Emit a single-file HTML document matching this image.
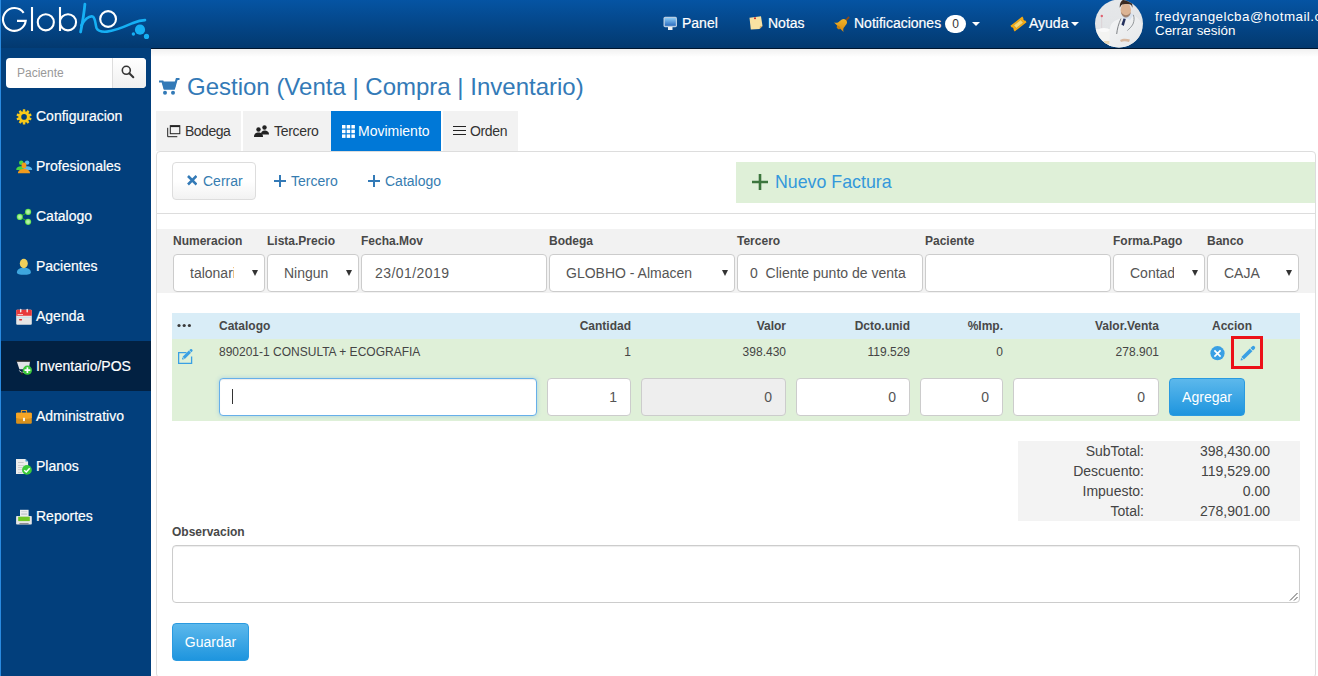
<!DOCTYPE html>
<html><head><meta charset="utf-8">
<style>
*{box-sizing:border-box;margin:0;padding:0}
html,body{width:1318px;height:676px;overflow:hidden;background:#fff;font-family:"Liberation Sans",sans-serif;color:#333;position:relative}
.a{position:absolute}
#hdr{left:0;top:0;width:1318px;height:49px;background:linear-gradient(#0554a3,#03396f);border-bottom:1px solid #00162f}
#lstrip{left:0;top:0;width:1px;height:676px;background:#2a8ae0;z-index:5}
#side{left:0;top:48px;width:151px;height:628px;background:#023f7c}
.nav{color:#fff;font-size:14px;line-height:16px;white-space:nowrap;margin-top:-1px;-webkit-text-stroke:0.2px #fff}
.mi{left:1px;width:150px;height:50px;color:#fff;font-size:14px}
.mi span{position:absolute;left:35px;top:17px;line-height:16px;white-space:nowrap;-webkit-text-stroke:0.2px #fff}
.mi svg{position:absolute;left:15px;top:16px;overflow:visible}
.mi.act{background:#022142}
#shadow{left:151px;top:49px;width:1167px;height:8px;background:linear-gradient(rgba(0,0,0,0.06),rgba(0,0,0,0))}
.title{left:187px;top:73px;font-size:24px;line-height:28px;color:#337ab7;white-space:nowrap}
.tab{top:111px;height:40px;background:#f2f2f2;font-size:14px;color:#333}
.tab span{position:absolute;top:13px;line-height:16px;white-space:nowrap}
.tab.act{background:#0078d7;color:#fff}
#panel{left:156px;top:151px;width:1160px;height:527px;border:1px solid #ddd;border-radius:4px}
.btnd{left:172px;top:162px;width:84px;height:38px;border:1px solid #ddd;border-radius:4px;background:linear-gradient(#fff 50%,#f2f2f2)}
.lnk{font-size:14px;color:#367cb0;line-height:16px;white-space:nowrap}
.lbl{font-size:12px;font-weight:bold;color:#484848;line-height:14px;white-space:nowrap;top:234px}
.inp{top:254px;height:38px;border:1px solid #ccc;border-radius:4px;background:#fff;font-size:14px;color:#555}
.inp span{position:absolute;top:10px;line-height:16px;white-space:nowrap}
.inp i{position:absolute;right:6px;top:15px;width:0;height:0;border-left:3.5px solid transparent;border-right:3.5px solid transparent;border-top:6px solid #333}
.th{font-size:12px;font-weight:bold;color:#484848;line-height:14px;top:319px;white-space:nowrap}
.td{font-size:12px;color:#444;line-height:14px;top:345px;white-space:nowrap}
.ti{top:378px;height:38px;border:1px solid #ccc;border-radius:4px;background:#fff;font-size:14px;color:#555}
.ti span{position:absolute;right:13px;top:10px;line-height:16px}
.tot{font-size:14px;color:#444;line-height:16px;white-space:nowrap;text-align:right}
</style></head><body>
<div id="hdr" class="a"></div>
<div id="lstrip" class="a"></div>
<div id="side" class="a"></div>
<div id="shadow" class="a"></div>

<!-- logo -->
<svg class="a" style="left:0;top:0" width="155" height="45" viewBox="0 0 155 45">
 <g fill="none" stroke="#fff" stroke-width="2.1">
  <path d="M23.65 12.78 A11.4 11.4 0 1 0 25.71 20.90 L17 20.9"/>
  <line x1="32" y1="7" x2="32" y2="31"/>
  <circle cx="45.8" cy="22.3" r="8.05"/>
  <line x1="60" y1="7" x2="60" y2="31"/>
  <circle cx="68" cy="22.3" r="8.05"/>
  <circle cx="108.1" cy="19" r="7.9"/>
 </g>
 <g fill="none" stroke="#16b0f4" stroke-linecap="round">
  <path d="M84.9 4.2 C84.2 12 82.6 22 80.6 32" stroke-width="2.8"/>
  <path d="M81.3 25.5 C84 20 89 15.5 92.5 16.5 C95.5 17.5 95.2 24 96.5 28 C98 31.5 102 32 107 31.6 C115 31 125 26.5 133 23 C138 21 142 20.2 145 20.1" stroke-width="2.6"/>
 </g>
 <g fill="#16b0f4">
  <circle cx="140" cy="29.7" r="5.1"/>
  <circle cx="146.5" cy="36.4" r="2.6"/>
  <circle cx="133.4" cy="34" r="1.7"/>
 </g>
</svg>

<!-- header nav -->
<svg class="a" style="left:663px;top:16px" width="15" height="15" viewBox="0 0 15 15"><defs><linearGradient id="scr" x1="0" y1="0" x2="0" y2="1"><stop offset="0" stop-color="#8ccaf4"/><stop offset="1" stop-color="#2a6cc0"/></linearGradient></defs><rect x="0.5" y="0.8" width="13.5" height="10.4" rx="1.6" fill="#b8cde2"/><rect x="1.8" y="2" width="11" height="7.8" fill="url(#scr)"/><rect x="5" y="11" width="4.5" height="3" fill="#f2f2f2"/></svg>
<div class="a nav" style="left:682px;top:16px">Panel</div>
<svg class="a" style="left:749px;top:16px" width="15" height="14" viewBox="0 0 15 14"><path d="M0.5 1.8 L12 0.3 L13.5 10 L10.5 13 L1.8 13.5 Z" fill="#f8e2a2"/><path d="M10.5 13 L11 10.3 L13.5 10 Z" fill="#d8a860"/><circle cx="6" cy="2.3" r="1" fill="#c82020"/></svg>
<div class="a nav" style="left:768px;top:16px">Notas</div>
<svg class="a" style="left:833px;top:15px" width="18" height="18" viewBox="0 0 18 18"><defs><linearGradient id="bel" x1="0" y1="0" x2="1" y2="1"><stop offset="0" stop-color="#f8c030"/><stop offset="1" stop-color="#d88a10"/></linearGradient></defs><g transform="rotate(45 9 9)"><rect x="8.2" y="-1" width="1.8" height="5" fill="#8a4a18"/><path d="M9 3.5 C5.8 3.5 5.3 6 5.3 8.8 C5.3 11.3 4.3 12.3 2.3 13.5 L15.7 13.5 C13.7 12.3 12.7 11.3 12.7 8.8 C12.7 6 12.2 3.5 9 3.5 Z" fill="url(#bel)"/><ellipse cx="9" cy="14" rx="2" ry="1.5" fill="#c8800c"/></g></svg>
<div class="a nav" style="left:854px;top:16px">Notificaciones</div>
<div class="a" style="left:945px;top:15px;width:21px;height:18px;border-radius:9px;background:#fff;color:#333;font-size:12px;text-align:center;line-height:18px">0</div>
<div class="a" style="left:972px;top:22px;width:0;height:0;border-left:4px solid transparent;border-right:4px solid transparent;border-top:4px solid #fff"></div>
<svg class="a" style="left:1010px;top:16px" width="17" height="16" viewBox="0 0 17 16"><g transform="rotate(-38 8.5 8)"><path d="M1 4.5 H16 V6.5 C15 6.5 15 9.5 16 9.5 V11.5 H1 V9.5 C2 9.5 2 6.5 1 6.5 Z" fill="#f6aa10"/><rect x="4" y="6" width="9" height="4" fill="#f4d878" stroke="#c89830" stroke-width="0.6"/></g></svg>
<div class="a nav" style="left:1029px;top:16px">Ayuda</div>
<div class="a" style="left:1071px;top:22px;width:0;height:0;border-left:4px solid transparent;border-right:4px solid transparent;border-top:4px solid #fff"></div>

<!-- avatar -->
<svg class="a" style="left:1094px;top:-1px" width="50" height="50" viewBox="0 0 50 50">
 <defs><clipPath id="cc"><circle cx="25" cy="24.6" r="24"/></clipPath>
 <linearGradient id="bgav" x1="0" y1="0" x2="0" y2="1"><stop offset="0" stop-color="#e6e8ea"/><stop offset="0.6" stop-color="#e2e4e6"/><stop offset="1" stop-color="#f2f2f0"/></linearGradient>
 <linearGradient id="coat" x1="0" y1="0" x2="1" y2="1"><stop offset="0" stop-color="#f4f5f6"/><stop offset="1" stop-color="#e4e6e8"/></linearGradient></defs>
 <circle cx="25" cy="24.6" r="24" fill="url(#bgav)"/>
 <g clip-path="url(#cc)">
  <rect x="0" y="30" width="18" height="20" fill="#f4f4f2"/>
  <ellipse cx="10" cy="31" rx="5" ry="2" fill="#fafafa"/>
  <rect x="7.5" y="17" width="0.6" height="12" fill="#d8c8cc"/>
  <circle cx="7.8" cy="17" r="1.2" fill="#e06070"/>
  <rect x="10" y="42" width="8" height="3" fill="#e8d8b8"/>
  <path d="M15 50 L16 29 C17 24 20 22 24 20.5 L29 18 L38 16 C42 17 46 20 48 26 L50 50 Z" fill="url(#coat)"/>
  <path d="M28 15.2 L29 21.6 L33 19.5 L36 21 L39.8 15.2 C36 13.5 31 13.5 28 15.2 Z" fill="#d8e2ee"/>
  <path d="M29.5 19.5 L31.8 20 L29.8 27 L27.4 25.5 Z" fill="#26325e"/>
  <path d="M27 19.5 C24.5 25 23.2 30 22.7 35" stroke="#707478" stroke-width="0.9" fill="none"/>
  <path d="M39.4 15.9 C40.5 19 40.2 22 39 25 C37.5 28 35 30 33.4 31.5" stroke="#8a8e92" stroke-width="0.9" fill="none"/>
  <path d="M26 41 C29 39 33 39.5 36 40.5 L35 43 C32 42 29 42 27 43 Z" fill="#d8b8a0"/>
  <ellipse cx="31.8" cy="11" rx="5.2" ry="6.7" fill="#dcb494"/>
  <path d="M27 13 C27.5 17 30 18.5 32 18.5 C34 18.5 36.5 17 36.8 13 C35.5 15.5 33.5 16.2 32 16.2 C30.5 16.2 28.5 15.5 27 13 Z" fill="#7a5a48" opacity="0.6"/>
  <path d="M25.8 8.8 C25.2 2.5 29 0 32.2 0 C36 0 38.8 2.5 38.4 8.8 L37.2 6 C35 4.8 29.5 4.8 27.2 6.2 Z" fill="#3a2a22"/>
 </g>
</svg>
<div class="a" style="left:1155px;top:10px;font-size:13.4px;line-height:14px;color:#fff;white-space:nowrap;letter-spacing:0.45px">fredyrangelcba@hotmail.com</div>
<div class="a" style="left:1155px;top:24px;font-size:13.4px;line-height:14px;color:#fff;white-space:nowrap">Cerrar sesión</div>

<!-- sidebar search -->
<div class="a" style="left:6px;top:58px;width:140px;height:30px;background:#fff;border-radius:4px"></div>
<div class="a" style="left:112px;top:58px;width:34px;height:30px;border-left:1px solid #ddd;border-radius:0 4px 4px 0;background:linear-gradient(#fff,#f0f0f0)"></div>
<div class="a" style="left:17px;top:66px;font-size:12px;line-height:14px;color:#999">Paciente</div>
<svg class="a" style="left:121px;top:65px" width="14" height="14" viewBox="0 0 14 14"><circle cx="5.3" cy="5.3" r="4" fill="none" stroke="#333" stroke-width="1.6"/><line x1="8.3" y1="8.3" x2="12.3" y2="12.3" stroke="#333" stroke-width="2" stroke-linecap="round"/></svg>

<!-- sidebar menu -->
<div class="a mi" style="top:91px"><svg width="18" height="19" viewBox="0 0 18 19"><g fill="#f7c91a"><circle cx="8.05" cy="9.9" r="5.7"/><rect x="6.80" y="2.30" width="2.5" height="4" rx="0.5" transform="rotate(0 8.05 9.9)"/><rect x="6.80" y="2.30" width="2.5" height="4" rx="0.5" transform="rotate(36 8.05 9.9)"/><rect x="6.80" y="2.30" width="2.5" height="4" rx="0.5" transform="rotate(72 8.05 9.9)"/><rect x="6.80" y="2.30" width="2.5" height="4" rx="0.5" transform="rotate(108 8.05 9.9)"/><rect x="6.80" y="2.30" width="2.5" height="4" rx="0.5" transform="rotate(144 8.05 9.9)"/><rect x="6.80" y="2.30" width="2.5" height="4" rx="0.5" transform="rotate(180 8.05 9.9)"/><rect x="6.80" y="2.30" width="2.5" height="4" rx="0.5" transform="rotate(216 8.05 9.9)"/><rect x="6.80" y="2.30" width="2.5" height="4" rx="0.5" transform="rotate(252 8.05 9.9)"/><rect x="6.80" y="2.30" width="2.5" height="4" rx="0.5" transform="rotate(288 8.05 9.9)"/><rect x="6.80" y="2.30" width="2.5" height="4" rx="0.5" transform="rotate(324 8.05 9.9)"/></g><circle cx="8.05" cy="9.9" r="2.8" fill="#023f7c"/></svg><span>Configuracion</span></div>
<div class="a mi" style="top:141px"><svg width="18" height="19" viewBox="0 0 18 19"><defs></defs><g fill="#4cd640"><circle cx="5.2" cy="5.8" r="2.2"/><path d="M0.2 13 C0.2 10.5 2 9.3 5 9.3 C7 9.3 8.5 10 8.5 13 Z"/></g><g fill="#5ab8ec"><circle cx="11.1" cy="5.6" r="2.2"/><path d="M7.5 13 C7.5 10 9 9.3 11 9.3 C14 9.3 16.2 10.5 16.2 13 Z"/></g><g fill="#f29a1c"><ellipse cx="8" cy="8.5" rx="2.4" ry="2.9"/><path d="M1.9 16.2 C1.9 13.5 4.5 12.3 6.8 12 L9.2 12 C11.5 12.3 14 13.5 14 16.2 Z"/></g></svg><span>Profesionales</span></div>
<div class="a mi" style="top:191px"><svg width="18" height="19" viewBox="0 0 18 19"><defs><radialGradient id="gdot"><stop offset="0" stop-color="#c4f2b8"/><stop offset="0.55" stop-color="#a0ec90"/><stop offset="1" stop-color="#4ddc3c"/></radialGradient></defs><g stroke="#3aa030" stroke-width="1"><line x1="3.8" y1="9.9" x2="12.1" y2="4.9"/><line x1="3.8" y1="9.9" x2="12.1" y2="14.8"/></g><g fill="url(#gdot)"><circle cx="3.8" cy="9.9" r="3.1"/><circle cx="12.1" cy="4.9" r="3.1"/><circle cx="12.1" cy="14.8" r="3.1"/></g></svg><span>Catalogo</span></div>
<div class="a mi" style="top:241px"><svg width="18" height="19" viewBox="0 0 18 19"><path d="M0.9 15.5 C0.9 12.5 3.5 10.8 7.9 10.8 C12.3 10.8 14.9 12.5 14.9 15.5 C14.9 17.2 12 17.8 7.9 17.8 C3.8 17.8 0.9 17.2 0.9 15.5 Z" fill="#3ea6de"/><ellipse cx="7.8" cy="6.5" rx="4" ry="4.7" fill="#efcf5a"/></svg><span>Pacientes</span></div>
<div class="a mi" style="top:291px"><svg width="18" height="19" viewBox="0 0 18 19"><rect x="0.2" y="2.8" width="15.6" height="15" rx="1" fill="#e6e6e6"/><path d="M0.2 3.8 C0.2 3.2 0.6 2.8 1.2 2.8 H14.8 C15.4 2.8 15.8 3.2 15.8 3.8 V8.8 H0.2 Z" fill="#e8393a"/><rect x="1" y="10" width="14" height="0.9" fill="#c8e0ec"/><rect x="3.1" y="12" width="3" height="1.4" rx="0.6" fill="#e03030"/><rect x="4" y="1.8" width="1.4" height="3.6" rx="0.7" fill="#f0f0f0"/><rect x="10.5" y="1.8" width="1.4" height="3.6" rx="0.7" fill="#f0f0f0"/><rect x="1.5" y="7" width="5.5" height="0.9" fill="#f8d0d0"/></svg><span>Agenda</span></div>
<div class="a mi act" style="top:341px"><svg width="18" height="19" viewBox="0 0 18 19"><path d="M0.8 4.6 H14 L12.8 12.3 H3.4 Z" fill="#e4e4e6"/><rect x="0.1" y="3.3" width="14.5" height="1.3" fill="#2a2622"/><path d="M3.4 13.5 L5 15.3 H10" stroke="#eee" stroke-width="1" fill="none"/><circle cx="6" cy="16.5" r="1.2" fill="#2a2622"/><circle cx="11.4" cy="13.2" r="4.6" fill="#3cc83a"/><path d="M11.4 10.3 V16.1 M8.5 13.2 H14.3" stroke="#fff" stroke-width="1.7"/></svg><span>Inventario/POS</span></div>
<div class="a mi" style="top:391px"><svg width="18" height="19" viewBox="0 0 18 19"><path d="M4.9 5.8 V3.6 C4.9 3.3 5.1 3.1 5.4 3.1 H10.6 C10.9 3.1 11.1 3.3 11.1 3.6 V5.8 H9.9 V4.1 H6.1 V5.8 Z" fill="#e89a20"/><rect x="0.1" y="5.8" width="15.7" height="11" rx="1.2" fill="#d8901c"/><path d="M0.1 7 C0.1 6.3 0.6 5.8 1.3 5.8 H14.6 C15.3 5.8 15.8 6.3 15.8 7 V11 C11 12.3 5 12.3 0.1 11 Z" fill="#f5a524"/><rect x="7" y="10.8" width="2" height="3.3" fill="#f6f0e0"/></svg><span>Administrativo</span></div>
<div class="a mi" style="top:441px"><svg width="18" height="19" viewBox="0 0 18 19"><path d="M0 2 H9.5 L12.1 4.6 V17 H0 Z" fill="#ececec"/><path d="M9.5 2 L12.1 4.6 H9.5 Z" fill="#3a98d0"/><g fill="#c8c8c8"><rect x="2" y="5" width="5.6" height="1"/><rect x="2" y="8.2" width="6" height="0.8"/><rect x="2" y="10.2" width="4.5" height="0.8"/><rect x="2" y="12.3" width="4" height="0.8"/><rect x="2" y="15" width="4" height="0.8"/></g><circle cx="10.9" cy="12.9" r="4.9" fill="#3ccc38"/><path d="M8.2 13.2 L10.3 15 L13.7 11.2" stroke="#fff" stroke-width="1.5" fill="none"/></svg><span>Planos</span></div>
<div class="a mi" style="top:491px"><svg width="18" height="19" viewBox="0 0 18 19"><rect x="4" y="2.8" width="8.6" height="7" fill="#eeeeee"/><rect x="5.2" y="4.3" width="6" height="0.8" fill="#c8ccd0"/><rect x="5.2" y="6.3" width="6" height="1.6" fill="#c8ccd0"/><rect x="0.1" y="9" width="15.7" height="8.6" rx="0.8" fill="#e6e6e6"/><rect x="2.2" y="9.7" width="11.6" height="4.4" fill="#72c826"/><rect x="3.4" y="16.2" width="9.2" height="1.1" fill="#7a7a7a"/></svg><span>Reportes</span></div>

<!-- title -->
<svg class="a" style="left:159px;top:78px" width="21" height="17" viewBox="0 0 21 17"><path d="M0 3.5 H3.5 L5.5 10.5 H15 L17 3.5 L17.8 1 H20.5" fill="none" stroke="#337ab7" stroke-width="2.2"/><path d="M3 3.5 H17.5 L15.5 11.5 H5 Z" fill="#337ab7"/><circle cx="6" cy="14.8" r="2" fill="#337ab7"/><circle cx="14" cy="14.8" r="2" fill="#337ab7"/></svg>
<div class="a title">Gestion (Venta | Compra | Inventario)</div>

<!-- tabs -->
<div class="a tab" style="left:156px;width:85px"><svg class="a" style="left:11px;top:14px" width="14" height="13" viewBox="0 0 14 13"><rect x="3.3" y="0.7" width="9.5" height="8" fill="none" stroke="#222" stroke-width="1"/><rect x="3.3" y="0.5" width="9.5" height="1.6" fill="#222"/><path d="M0.7 2.8 V11.7 H10.3" fill="none" stroke="#222" stroke-width="1"/></svg><span style="left:29px;top:12px;letter-spacing:-0.5px">Bodega</span></div>
<div class="a tab" style="left:243px;width:88px"><svg class="a" style="left:11px;top:14px" width="15" height="12" viewBox="0 0 15 12"><circle cx="4.5" cy="4.5" r="2.2" fill="#222"/><path d="M0 12 C0 8.5 2 7.5 4.5 7.5 C7 7.5 9 8.5 9 12 Z" fill="#222"/><circle cx="10.5" cy="2.5" r="2.2" fill="#222"/><path d="M7 9.5 C7 6.5 8.5 5.5 10.5 5.5 C12.8 5.5 15 6.5 15 9.5 Z" fill="#222"/></svg><span style="left:31px;top:12px;letter-spacing:-0.3px">Tercero</span></div>
<div class="a tab act" style="left:331px;width:110px"><svg class="a" style="left:11px;top:14px" width="13" height="13" viewBox="0 0 13 13"><g fill="#fff"><rect x="0" y="0" width="3.5" height="3.5"/><rect x="4.7" y="0" width="3.5" height="3.5"/><rect x="9.4" y="0" width="3.5" height="3.5"/><rect x="0" y="4.7" width="3.5" height="3.5"/><rect x="4.7" y="4.7" width="3.5" height="3.5"/><rect x="9.4" y="4.7" width="3.5" height="3.5"/><rect x="0" y="9.4" width="3.5" height="3.5"/><rect x="4.7" y="9.4" width="3.5" height="3.5"/><rect x="9.4" y="9.4" width="3.5" height="3.5"/></g></svg><span style="left:27px;top:12px">Movimiento</span></div>
<div class="a tab" style="left:443px;width:75px"><svg class="a" style="left:10px;top:15px" width="13" height="11" viewBox="0 0 13 11"><g stroke="#222" stroke-width="1"><line x1="0" y1="0.5" x2="13" y2="0.5"/><line x1="0" y1="4.5" x2="13" y2="4.5"/><line x1="0" y1="8.5" x2="13" y2="8.5"/></g></svg><span style="left:27px;top:12px;letter-spacing:-0.35px">Orden</span></div>

<!-- panel -->
<div id="panel" class="a"></div>

<div class="a btnd"></div>
<svg class="a" style="left:187px;top:175px" width="10" height="11" viewBox="0 0 10 11"><path d="M1 1 L9.5 9.5 M9.5 1 L1 9.5" stroke="#337ab7" stroke-width="2.6"/></svg>
<div class="a lnk" style="left:203px;top:173px">Cerrar</div>
<svg class="a" style="left:274px;top:175px" width="12" height="12" viewBox="0 0 12 12"><path d="M6 0 V12 M0 6 H12" stroke="#337ab7" stroke-width="2"/></svg>
<div class="a lnk" style="left:291px;top:173px">Tercero</div>
<svg class="a" style="left:368px;top:175px" width="12" height="12" viewBox="0 0 12 12"><path d="M6 0 V12 M0 6 H12" stroke="#337ab7" stroke-width="2"/></svg>
<div class="a lnk" style="left:385px;top:173px">Catalogo</div>
<div class="a" style="left:736px;top:162px;width:579px;height:41px;background:#dff0d8"></div>
<svg class="a" style="left:752px;top:174px" width="16" height="16" viewBox="0 0 16 16"><path d="M8 0 V16 M0 8 H16" stroke="#3c763d" stroke-width="2.6"/></svg>
<div class="a" style="left:775px;top:172px;font-size:17.8px;line-height:21px;color:#3498db;white-space:nowrap">Nuevo Factura</div>
<div class="a" style="left:157px;top:213px;width:1158px;height:1px;background:#ddd"></div>
<div class="a" style="left:157px;top:229px;width:1158px;height:64px;background:#f2f2f2"></div>

<!-- form -->
<div class="a lbl" style="left:173px">Numeracion</div>
<div class="a inp" style="left:173px;width:92px"><span style="left:16px;width:44px;overflow:hidden;display:block">talonario</span><i></i></div>
<div class="a lbl" style="left:267px">Lista.Precio</div>
<div class="a inp" style="left:267px;width:92px"><span style="left:16px;width:44px;overflow:hidden;display:block">Ningun</span><i></i></div>
<div class="a lbl" style="left:361px">Fecha.Mov</div>
<div class="a inp" style="left:361px;width:186px"><span style="left:13px;letter-spacing:0.45px">23/01/2019</span></div>
<div class="a lbl" style="left:549px">Bodega</div>
<div class="a inp" style="left:549px;width:186px"><span style="left:16px;width:138px;overflow:hidden;display:block">GLOBHO - Almacen</span><i></i></div>
<div class="a lbl" style="left:737px">Tercero</div>
<div class="a inp" style="left:737px;width:186px"><span style="left:12px">0&nbsp; Cliente punto de venta</span></div>
<div class="a lbl" style="left:925px">Paciente</div>
<div class="a inp" style="left:925px;width:186px"><span style="left:13px"></span></div>
<div class="a lbl" style="left:1113px">Forma.Pago</div>
<div class="a inp" style="left:1113px;width:92px"><span style="left:16px;width:44px;overflow:hidden;display:block">Contado</span><i></i></div>
<div class="a lbl" style="left:1207px">Banco</div>
<div class="a inp" style="left:1207px;width:92px"><span style="left:16px;width:44px;overflow:hidden;display:block">CAJA</span><i></i></div>

<!-- table -->
<div class="a" style="left:172px;top:313px;width:1128px;height:26px;background:#d9edf7"></div>
<div class="a" style="left:172px;top:339px;width:1128px;height:82px;background:#dff0d8"></div>
<svg class="a" style="left:177px;top:323px" width="15" height="5" viewBox="0 0 15 5"><g fill="#3a3a3a"><circle cx="2" cy="2.5" r="1.6"/><circle cx="7.2" cy="2.5" r="1.6"/><circle cx="12.4" cy="2.5" r="1.6"/></g></svg>
<div class="a th" style="left:219px">Catalogo</div>
<div class="a th" style="left:531px;width:100px;text-align:right">Cantidad</div>
<div class="a th" style="left:686px;width:100px;text-align:right">Valor</div>
<div class="a th" style="left:810px;width:100px;text-align:right">Dcto.unid</div>
<div class="a th" style="left:903px;width:100px;text-align:right">%Imp.</div>
<div class="a th" style="left:1059px;width:100px;text-align:right">Valor.Venta</div>
<div class="a th" style="left:1182px;width:100px;text-align:center">Accion</div>
<svg class="a" style="left:178px;top:349px" width="16" height="16" viewBox="0 0 16 16"><path d="M8.5 3.6 H0.6 V14.4 H13.6 V7.5" fill="none" stroke="#3aa0e4" stroke-width="1.3"/><g transform="translate(4 10.6) rotate(-45)" fill="#3aa0e4"><path d="M0 0 L1.8 -1.4 L1.8 1.4 Z"/><rect x="2.4" y="-1.5" width="8.8" height="3"/><path d="M11.8 -1.5 H12.8 A1.5 1.5 0 0 1 12.8 1.5 H11.8 Z"/></g></svg>
<div class="a td" style="left:219px">890201-1 CONSULTA + ECOGRAFIA</div>
<div class="a td" style="left:531px;width:100px;text-align:right">1</div>
<div class="a td" style="left:686px;width:100px;text-align:right">398.430</div>
<div class="a td" style="left:810px;width:100px;text-align:right">119.529</div>
<div class="a td" style="left:903px;width:100px;text-align:right">0</div>
<div class="a td" style="left:1059px;width:100px;text-align:right">278.901</div>
<svg class="a" style="left:1210px;top:346px" width="15" height="15" viewBox="0 0 15 15"><circle cx="7.5" cy="7.2" r="7.1" fill="#3aa0e4"/><path d="M4.4 4.4 L10.6 10.6 M10.6 4.4 L4.4 10.6" stroke="#fff" stroke-width="1.7"/></svg>
<div class="a" style="left:1231px;top:336px;width:32px;height:33px;border:3px solid #ec1018"></div>
<svg class="a" style="left:1240px;top:345px" width="16" height="16" viewBox="0 0 16 16"><g transform="translate(0.6 15.4) rotate(-45)" fill="#3aa0e4"><path d="M0 0 L2.2 -1.5 L2.2 1.5 Z"/><rect x="2.9" y="-1.8" width="12" height="3.6"/><path d="M15.7 -1.8 H18 A1.8 1.8 0 0 1 18 1.8 H15.7 Z"/></g></svg>

<div class="a ti" style="left:219px;top:378px;width:318px;height:38px;border-color:#66afe9;box-shadow:inset 0 1px 1px rgba(0,0,0,.075),0 0 4px rgba(102,175,233,.45)"></div>
<div class="a" style="left:232px;top:389px;width:1px;height:15px;background:#333"></div>
<div class="a ti" style="left:547px;width:84px"><span>1</span></div>
<div class="a ti" style="left:641px;width:145px;background:#eee"><span>0</span></div>
<div class="a ti" style="left:796px;width:114px"><span>0</span></div>
<div class="a ti" style="left:920px;width:83px"><span>0</span></div>
<div class="a ti" style="left:1013px;width:146px"><span>0</span></div>
<div class="a" style="left:1169px;top:378px;width:76px;height:38px;border-radius:4px;background:linear-gradient(#5cb8ec,#1e95de);border:1px solid #2a9ae0;color:#fff;font-size:14px;line-height:36px;text-align:center">Agregar</div>

<!-- totals -->
<div class="a" style="left:1018px;top:441px;width:282px;height:80px;background:#f3f3f3"></div>
<div class="a tot" style="left:1044px;top:443px;width:100px">SubTotal:</div>
<div class="a tot" style="left:1170px;top:443px;width:100px">398,430.00</div>
<div class="a tot" style="left:1044px;top:463px;width:100px">Descuento:</div>
<div class="a tot" style="left:1170px;top:463px;width:100px">119,529.00</div>
<div class="a tot" style="left:1044px;top:483px;width:100px">Impuesto:</div>
<div class="a tot" style="left:1170px;top:483px;width:100px">0.00</div>
<div class="a tot" style="left:1044px;top:503px;width:100px">Total:</div>
<div class="a tot" style="left:1170px;top:503px;width:100px">278,901.00</div>

<!-- observacion -->
<div class="a lbl" style="left:172px;top:525px">Observacion</div>
<div class="a" style="left:172px;top:545px;width:1128px;height:58px;border:1px solid #ccc;border-radius:4px;box-shadow:inset 0 1px 1px rgba(0,0,0,.075)"></div>
<svg class="a" style="left:1289px;top:592px" width="9" height="9" viewBox="0 0 9 9"><path d="M1 8.5 L8.5 1 M5 8.5 L8.5 5" stroke="#555" stroke-width="1"/></svg>
<div class="a" style="left:172px;top:623px;width:77px;height:38px;border-radius:4px;background:linear-gradient(#5cb8ec,#1e95de);border:1px solid #2a9ae0;color:#fff;font-size:14px;line-height:36px;text-align:center">Guardar</div>
</body></html>
